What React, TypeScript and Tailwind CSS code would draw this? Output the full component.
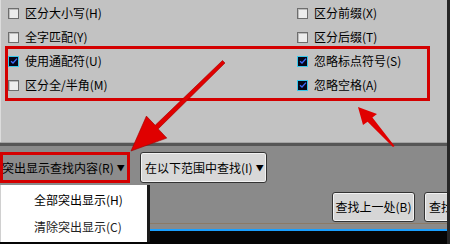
import React from "react";

type Opt = { label: string; checked?: boolean };

const left: Opt[] = [
  { label: "区分大小写(H)" },
  { label: "全字匹配(Y)" },
  { label: "使用通配符(U)", checked: true },
  { label: "区分全/半角(M)" },
];

const right: Opt[] = [
  { label: "区分前缀(X)" },
  { label: "区分后缀(T)" },
  { label: "忽略标点符号(S)", checked: true },
  { label: "忽略空格(A)", checked: true },
];

function Box({ checked }: { checked?: boolean }) {
  if (checked) {
    return (
      <span className="flex h-[11px] w-[11px] items-center justify-center border border-[#39c8ec] bg-[#060618]">
        <svg width="8" height="8" viewBox="0 0 8 8">
          <path d="M1 4.2 L3 6 L7 1.6" fill="none" stroke="#3b6cff" strokeWidth="1.3" />
        </svg>
      </span>
    );
  }
  return <span className="h-[11px] w-[11px] border border-[#6e6e6e] bg-[#ededed] shadow-[inset_1px_1px_0_#bdbdbd]" />;
}

function Row({ opt }: { opt: Opt }) {
  return (
    <div className="flex h-[24px] items-center gap-[6px]">
      <Box checked={opt.checked} />
      <span className="text-[12px] leading-none text-black">{opt.label}</span>
    </div>
  );
}

export default function App() {
  return (
    <div
      className="relative h-[244px] w-[450px] overflow-hidden border-r-[3px] border-[#262626] bg-[#c2c2c2]"
      style={{ fontFamily: '"Noto Sans CJK SC", "Noto Sans", sans-serif' }}
    >
      <div className="grid h-[142px] grid-cols-[290px_1fr] border-l border-[#dcdcdc] pt-[1px]">
        <div className="flex flex-col pl-[7px]">
          {left.map((o) => (
            <Row key={o.label} opt={o} />
          ))}
        </div>
        <div className="flex flex-col pl-[6px]">
          {right.map((o) => (
            <Row key={o.label} opt={o} />
          ))}
        </div>
      </div>

      <div className="h-[1px] bg-[#a4a4a4]" />
      <div className="h-[3px] bg-[#565656]" />

      <div className="flex h-[77px] flex-col bg-[#8a8a8a] pt-[6px]">
        <div className="flex h-[31px] items-stretch gap-[10px]">
          <div className="flex w-[130px] items-center gap-[3px] border-[3px] border-[#d40000] bg-[#8c8c8c] pl-0 text-[12px] text-black">
            <span className="-ml-[1px] whitespace-nowrap">突出显示查找内容(R)</span>
            <span className="text-[8px]">▼</span>
          </div>
          <div className="flex w-[127px] items-center gap-[3px] rounded-[3px] border border-[#333] bg-[#d8d8d8] pl-[4px] text-[12px] text-black shadow-[inset_0_0_0_1px_#f2f2f2]">
            <span className="whitespace-nowrap">在以下范围中查找(I)</span>
            <span className="text-[8px]">▼</span>
          </div>
        </div>
        <div className="mt-[9px] flex h-[30px] gap-[9px] pl-[332px]">
          <div className="flex w-[83px] shrink-0 items-center justify-center rounded-[3px] border border-[#333] bg-[#d6d6d6] text-[12px] text-black shadow-[inset_0_0_0_1px_#f2f2f2]">
            查找上一处(B)
          </div>
          <div className="flex w-[83px] shrink-0 items-center rounded-[3px] border border-[#333] bg-[#d6d6d6] pl-[4px] text-[12px] text-black shadow-[inset_0_0_0_1px_#f2f2f2]">
            查找下一处(F)
          </div>
        </div>
      </div>

      <div className="h-[1px] bg-[#8c7a66]" />
      <div className="h-[5px] bg-[#8a8a8a]" />
      <div className="h-[2px] bg-[#1aa0ff]" />
      <div className="h-[20px] bg-[#050505]" />

      <div className="absolute left-0 top-[185px] flex h-[57px] w-[150px] flex-col border-l border-[#d0d0d0] border-r-[3px] border-r-[#1a1a1a] bg-white text-[12px] text-black">
        <div className="flex h-[28px] items-center pl-[33px] pt-[2px]">全部突出显示(H)</div>
        <div className="flex h-[28px] items-center pl-[33px] text-[#222]">清除突出显示(C)</div>
      </div>

      <div className="pointer-events-none absolute left-[5px] top-[46px] h-[55px] w-[425px] border-[3px] border-[#d40000]" />

      <svg className="pointer-events-none absolute left-0 top-0" width="450" height="244">
        <polygon
          points="225,63 222.5,60.5 155.2,125.3 146.4,116.1 131,151 166.8,138.1 158.2,128.9"
          fill="#e00000"
          stroke="#a00000"
          strokeWidth="0.6"
        />
        <polygon points="394.5,146 393,147 367.6,121.8 363,125 358,107 377,114 372.4,117.6" fill="#e00000" />
      </svg>
    </div>
  );
}
